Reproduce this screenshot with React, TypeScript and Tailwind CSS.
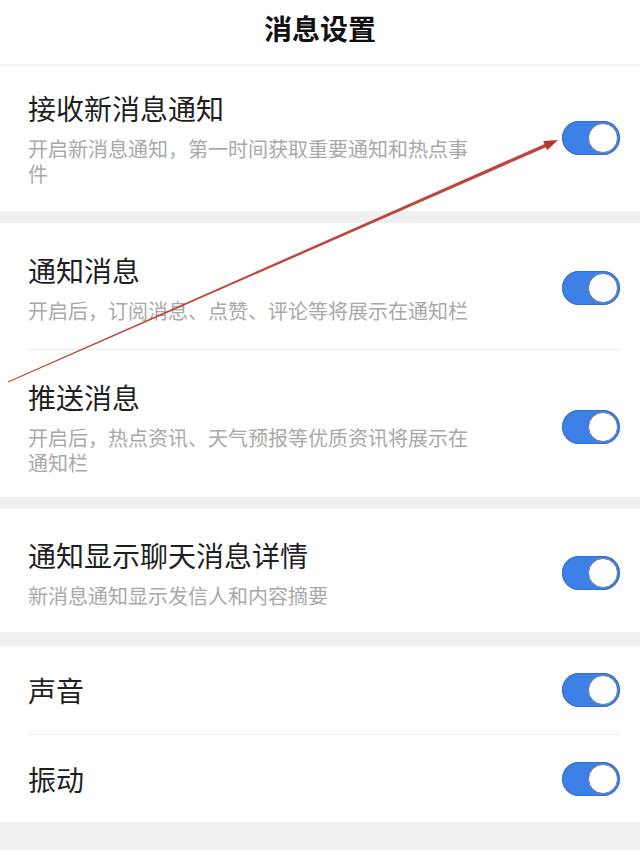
import React from 'react';

const Toggle: React.FC = () => (
  <div className="relative ml-auto w-[58px] h-[34px] shrink-0 rounded-full bg-[#3d80e6] shadow-[inset_0_0_0_1px_#3470d0]">
    <div className="absolute right-[2px] top-[2px] w-[30px] h-[30px] rounded-full bg-white border-[1.5px] border-[#6f7d8c]" />
  </div>
);

type ItemProps = {
  title: string;
  desc?: string;
  pad: string;
};

const Item: React.FC<ItemProps> = ({ title, desc, pad }) => (
  <div className={`flex items-center pl-[28px] pr-[20px] ${pad}`}>
    <div className="w-[450px] shrink-0">
      <div className="text-[28px] leading-[36px] text-[#1f1f1f]">{title}</div>
      {desc && (
        <div className="mt-[10px] text-[20px] leading-[25px] text-[#a9a9a9] whitespace-pre-line">{desc}</div>
      )}
    </div>
    <Toggle />
  </div>
);

const Divider: React.FC = () => <div className="ml-[28px] mr-[20px] h-px bg-[#ececec]" />;

export default function App() {
  return (
    <div
      className="relative w-[640px] h-[850px] overflow-hidden bg-[#f0f0f0]"
      style={{ fontFamily: '"Noto Sans CJK SC", "Noto Sans", sans-serif' }}
    >
      <header className="bg-white h-[66px] pt-[10px] text-center border-b-2 border-[#f4f4f4]">
        <h1 className="text-[28px] leading-[36px] font-bold text-[#111]">消息设置</h1>
      </header>

      <section className="bg-white">
        <Item
          title="接收新消息通知"
          desc="开启新消息通知，第一时间获取重要通知和热点事件"
          pad="pt-[24px] pb-[25px]"
        />
      </section>

      <section className="bg-white mt-[12px]">
        <Item
          title="通知消息"
          desc="开启后，订阅消息、点赞、评论等将展示在通知栏"
          pad="pt-[29px] pb-[26px]"
        />
        <Divider />
        <Item
          title="推送消息"
          desc={'开启后，热点资讯、天气预报等优质资讯将展示在\n通知栏'}
          pad="pt-[29px] pb-[22px]"
        />
      </section>

      <section className="bg-white mt-[12px]">
        <Item
          title="通知显示聊天消息详情"
          desc="新消息通知显示发信人和内容摘要"
          pad="pt-[28px] pb-[24px]"
        />
      </section>

      <section className="bg-white mt-[14px]">
        <Item title="声音" pad="h-[88px]" />
        <Divider />
        <Item title="振动" pad="h-[87px]" />
      </section>

      {/* red annotation arrow drawn over the page */}
      <svg
        className="absolute inset-0 pointer-events-none"
        width="640"
        height="850"
        viewBox="0 0 640 850"
      >
        <polygon
          points="8.2,382.5 7.8,381.5 546.3,143.2 547.7,146.5"
          fill="#b8372c"
          opacity="0.92"
        />
        <polygon points="558,140 543.2,141 547.2,150.2" fill="#b8372c" />
      </svg>
    </div>
  );
}
